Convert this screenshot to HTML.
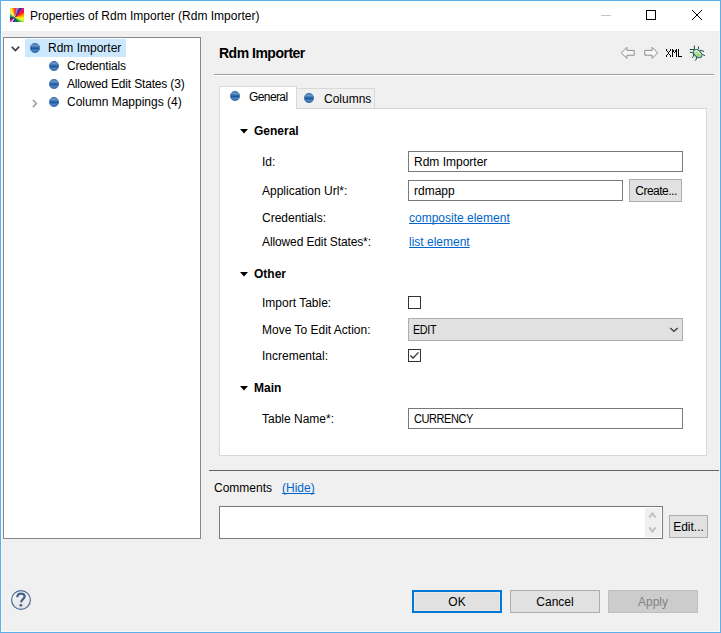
<!DOCTYPE html>
<html><head><meta charset="utf-8">
<style>
*{margin:0;padding:0;box-sizing:border-box}
html,body{width:721px;height:633px;overflow:hidden;background:#f0f0f0}
body{position:relative;font-family:"Liberation Sans",sans-serif;font-size:12px;color:#000}
.a{position:absolute}
.t{position:absolute;white-space:nowrap;line-height:14px}
.win{left:0;top:0;width:721px;height:633px;border:1px solid #5aaee9;background:#f0f0f0}
.title{left:1px;top:1px;width:719px;height:30px;background:#fff}
.field{position:absolute;background:#fff;border:1px solid #7a7a7a}
.btn{position:absolute;background:#e1e1e1;border:1px solid #adadad;text-align:center;padding-top:1px}
.lbl{position:absolute;white-space:nowrap;line-height:14px}
.link{color:#0066cc;text-decoration:underline;text-decoration-skip-ink:none}
.b{font-weight:bold}
</style></head><body>
<svg width="0" height="0" style="position:absolute"><defs>
<linearGradient id="sg" x1="0" y1="0" x2="0" y2="1">
<stop offset="0" stop-color="#3d6fae"/><stop offset="0.22" stop-color="#6b96c8"/><stop offset="0.45" stop-color="#2f6aab"/><stop offset="0.55" stop-color="#1c5b9f"/><stop offset="0.8" stop-color="#5588c2"/><stop offset="1" stop-color="#1a5599"/>
</linearGradient></defs></svg>
<div class="a win"></div>
<div class="a title"></div>
<div class="a" style="left:1px;top:31px;width:719px;height:601px;border:1px solid #faf7f4;border-top:none"></div>
<!-- app icon -->
<div class="a" style="left:10px;top:8px;width:14px;height:14px;background:conic-gradient(from 0deg at 5px 9.5px,#ff2020 0deg,#b080d0 15deg,#302080 30deg,#d02090 42deg,#ff1010 55deg,#ff9000 72deg,#ffff00 95deg,#c8f060 112deg,#20a020 135deg,#006020 160deg,#2080c0 178deg,#101070 198deg,#e0e0ff 215deg,#e02080 235deg,#101070 258deg,#108080 275deg,#40b040 295deg,#f0f0a0 318deg,#f0f020 335deg,#ff9020 348deg,#ff2020 360deg)"></div>
<div class="t" style="left:30px;top:9px">Properties of Rdm Importer (Rdm Importer)</div>
<!-- title buttons -->
<div class="a" style="left:601px;top:15px;width:10px;height:1px;background:#c6c6c6"></div>
<div class="a" style="left:646px;top:10px;width:10px;height:10px;border:1px solid #000"></div>
<svg class="a" style="left:692px;top:10px" width="10" height="10" viewBox="0 0 10 10"><path d="M0 0L10 10M10 0L0 10" stroke="#000" stroke-width="1"/></svg>

<!-- tree -->
<div class="a" style="left:3px;top:37px;width:198px;height:502px;background:#fff;border:1px solid #828790"></div>
<div class="a" style="left:25px;top:39px;width:101px;height:18px;background:#cce8ff"></div>


<svg class="a" style="left:10px;top:44px" width="11" height="9" viewBox="0 0 11 9"><path d="M1.8 2.8L5.46 6.5L9.1 2.7" fill="none" stroke="#404040" stroke-width="1.7"/></svg>
<svg class="a" style="left:30px;top:43px" width="10" height="10" viewBox="0 0 10 10"><circle cx="5" cy="5" r="4.7" fill="url(#sg)" stroke="#2a5f9f" stroke-width="0.6"/></svg>
<div class="t" style="left:48px;top:41px">Rdm Importer</div>
<svg class="a" style="left:49px;top:61px" width="10" height="10" viewBox="0 0 10 10"><circle cx="5" cy="5" r="4.7" fill="url(#sg)" stroke="#2a5f9f" stroke-width="0.6"/></svg>
<div class="t" style="left:67px;top:59px;letter-spacing:-0.18px">Credentials</div>
<svg class="a" style="left:49px;top:79px" width="10" height="10" viewBox="0 0 10 10"><circle cx="5" cy="5" r="4.7" fill="url(#sg)" stroke="#2a5f9f" stroke-width="0.6"/></svg>
<div class="t" style="left:67px;top:77px;letter-spacing:-0.17px">Allowed Edit States (3)</div>
<svg class="a" style="left:30px;top:98px" width="9" height="11" viewBox="0 0 9 11"><path d="M2.9 1.8L6.35 5.4L2.9 9.1" fill="none" stroke="#a6a6a6" stroke-width="1.7"/></svg>
<svg class="a" style="left:49px;top:97px" width="10" height="10" viewBox="0 0 10 10"><circle cx="5" cy="5" r="4.7" fill="url(#sg)" stroke="#2a5f9f" stroke-width="0.6"/></svg>
<div class="t" style="left:67px;top:95px">Column Mappings (4)</div>

<!-- header -->
<div class="t b" style="left:219px;top:46px;font-size:14px;letter-spacing:-0.5px">Rdm Importer</div>
<div class="a" style="left:214px;top:74px;width:500px;height:1px;background:#a0a0a0"></div>
<div class="a" style="left:214px;top:75px;width:500px;height:1px;background:#fff"></div>


<svg class="a" style="left:619px;top:45px" width="18" height="16" viewBox="0 0 18 16"><path d="M2.3 7.9L7.9 2.3V5.4H15.2V10.2H7.9V13.4Z" fill="#f6f6f6" stroke="#8c8c8c" stroke-width="1" stroke-linejoin="round"/></svg>
<svg class="a" style="left:642px;top:45px;transform:scaleX(-1)" width="18" height="16" viewBox="0 0 18 16"><path d="M2.3 7.9L7.9 2.3V5.4H15.2V10.2H7.9V13.4Z" fill="#f6f6f6" stroke="#8c8c8c" stroke-width="1" stroke-linejoin="round"/></svg>
<svg class="a" style="left:666px;top:49px" width="16" height="8" viewBox="0 0 16 8" shape-rendering="crispEdges" fill="#000">
<rect x="0" y="0" width="1" height="2"/><rect x="4" y="0" width="1" height="2"/><rect x="1" y="2" width="1" height="1"/><rect x="3" y="2" width="1" height="1"/><rect x="2" y="3" width="1" height="2"/><rect x="1" y="5" width="1" height="1"/><rect x="3" y="5" width="1" height="1"/><rect x="0" y="6" width="1" height="2"/><rect x="4" y="6" width="1" height="2"/>
<rect x="6" y="0" width="1" height="8"/><rect x="10" y="0" width="1" height="8"/><rect x="7" y="1" width="1" height="2"/><rect x="9" y="1" width="1" height="2"/><rect x="8" y="3" width="1" height="1"/>
<rect x="12" y="0" width="1" height="8"/><rect x="12" y="7" width="4" height="1"/>
</svg>
<svg class="a" style="left:686px;top:43px" width="22" height="20" viewBox="0 0 22 20">
<defs><linearGradient id="bg1" x1="0" y1="0" x2="1" y2="1"><stop offset="0" stop-color="#f0f8e0"/><stop offset="0.5" stop-color="#c4e3a0"/><stop offset="1" stop-color="#7cbf50"/></linearGradient></defs>
<g fill="none" stroke="#1c4a32" stroke-width="1" stroke-linecap="round">
<path d="M8.4 3V6.2M4.2 6.5H8M12.5 4V5.7L11.3 6.6M14.2 7.4L15.8 7.6L17.7 8.4M4.2 9.3L6 9.5L7.6 10.4M16.4 11.4L18.6 12.5M7.6 10.7V13.3L6.3 14.5M10.4 14.2V16.1L9.3 17.4"/>
</g>
<ellipse cx="11.7" cy="10.6" rx="5" ry="3.2" transform="rotate(45 11.7 10.6)" fill="url(#bg1)" stroke="#1a6878" stroke-width="1"/>
<path d="M10 9L14 13" stroke="#8cc070" stroke-width="0.8"/>
</svg>

<!-- tabs & content -->
<div class="a" style="left:296px;top:88px;width:79px;height:21px;border:1px solid #d9d9d9;background:#f0f0f0"></div>
<div class="a" style="left:219px;top:108px;width:488px;height:348px;border:1px solid #d9d9d9;background:#fff"></div>
<div class="a" style="left:219px;top:86px;width:78px;height:23px;border:1px solid #d9d9d9;border-bottom:none;background:#fff"></div>
<div class="t" style="left:249px;top:90px;letter-spacing:-0.6px">General</div>
<div class="t" style="left:324px;top:92px">Columns</div>


<svg class="a" style="left:230px;top:91px" width="10" height="10" viewBox="0 0 10 10"><circle cx="5" cy="5" r="4.7" fill="url(#sg)" stroke="#2a5f9f" stroke-width="0.6"/></svg><svg class="a" style="left:304px;top:93px" width="10" height="10" viewBox="0 0 10 10"><circle cx="5" cy="5" r="4.7" fill="url(#sg)" stroke="#2a5f9f" stroke-width="0.6"/></svg>
<svg class="a" style="left:240px;top:129px" width="8" height="5" viewBox="0 0 8 5"><path d="M0 0H8L4 4.5Z" fill="#000"/></svg>
<div class="t b" style="left:254px;top:124px">General</div>
<div class="t" style="left:262px;top:155px">Id:</div>
<div class="field" style="left:408px;top:151px;width:275px;height:21px"></div>
<div class="t" style="left:414px;top:155px">Rdm Importer</div>
<div class="t" style="left:262px;top:184px">Application Url*:</div>
<div class="field" style="left:408px;top:180px;width:215px;height:21px"></div>
<div class="t" style="left:414px;top:184px">rdmapp</div>
<div class="btn" style="left:629px;top:179px;width:53px;height:23px;line-height:21px;letter-spacing:-0.5px;text-indent:1px">Create...</div>
<div class="t" style="left:262px;top:211px">Credentials:</div>
<div class="t link" style="left:409px;top:211px">composite element</div>
<div class="t" style="left:262px;top:235px;letter-spacing:-0.12px">Allowed Edit States*:</div>
<div class="t link" style="left:409px;top:235px">list element</div>

<svg class="a" style="left:240px;top:272px" width="8" height="5" viewBox="0 0 8 5"><path d="M0 0H8L4 4.5Z" fill="#000"/></svg>
<div class="t b" style="left:254px;top:267px">Other</div>
<div class="t" style="left:262px;top:296px">Import Table:</div>
<div class="a" style="left:408px;top:296px;width:13px;height:13px;border:1px solid #333;background:#fff"></div>
<div class="t" style="left:262px;top:323px">Move To Edit Action:</div>
<div class="a" style="left:408px;top:318px;width:275px;height:23px;border:1px solid #adadad;background:#e1e1e1"></div>
<div class="t" style="left:413px;top:323px;letter-spacing:-0.4px;transform:scaleX(0.9);transform-origin:0 0">EDIT</div>
<svg class="a" style="left:668px;top:325px" width="12" height="9" viewBox="0 0 12 9"><path d="M2.2 2.9L5.9 6.3L9.7 2.9" fill="none" stroke="#404040" stroke-width="1.3"/></svg>
<div class="t" style="left:262px;top:349px">Incremental:</div>
<div class="a" style="left:408px;top:349px;width:13px;height:13px;border:1px solid #333;background:#fff"></div>
<svg class="a" style="left:408px;top:349px" width="13" height="13" viewBox="0 0 13 13"><path d="M2.3 6.4L5 9L10.5 3.4" fill="none" stroke="#333" stroke-width="1.35"/></svg>

<svg class="a" style="left:240px;top:386px" width="8" height="5" viewBox="0 0 8 5"><path d="M0 0H8L4 4.5Z" fill="#000"/></svg>
<div class="t b" style="left:254px;top:381px">Main</div>
<div class="t" style="left:262px;top:412px">Table Name*:</div>
<div class="field" style="left:408px;top:408px;width:275px;height:21px"></div>
<div class="t" style="left:414px;top:412px;letter-spacing:-0.5px;transform:scaleX(0.92);transform-origin:0 0">CURRENCY</div>

<!-- bottom separator -->
<div class="a" style="left:209px;top:470px;width:510px;height:1px;background:#646464"></div>
<div class="t" style="left:214px;top:481px">Comments</div>
<div class="t link" style="left:282px;top:481px">(Hide)</div>
<div class="field" style="left:219px;top:506px;width:444px;height:33px"></div>
<div class="a" style="left:645px;top:508px;width:16px;height:29px;background:#f0f0f0"></div>
<svg class="a" style="left:645px;top:508px" width="16" height="29" viewBox="0 0 16 29"><path d="M4.2 9.7L7.4 5.5L10.6 9.7M4.2 19.3L7.4 23.5L10.6 19.3" fill="none" stroke="#c2c2c2" stroke-width="2"/></svg>
<div class="btn" style="left:669px;top:515px;width:39px;height:23px;line-height:21px">Edit...</div>


<svg class="a" style="left:10px;top:589px" width="22" height="22" viewBox="0 0 22 22">
<defs><linearGradient id="hg" x1="0" y1="0" x2="0" y2="1"><stop offset="0" stop-color="#fafafa"/><stop offset="1" stop-color="#e4e4e4"/></linearGradient></defs>
<circle cx="11" cy="11" r="9.4" fill="url(#hg)" stroke="#4d6897" stroke-width="1.2"/>
<path d="M7.3 8.3C7.3 5.8 8.9 4.7 11 4.7C13.2 4.7 14.7 5.9 14.7 7.6C14.7 9.7 11.3 10.1 11.1 13.4" fill="none" stroke="#44608f" stroke-width="2.2"/>
<circle cx="10.9" cy="16.3" r="1.4" fill="#44608f"/>
</svg>

<!-- dialog buttons -->
<div class="btn" style="left:412px;top:590px;width:90px;height:23px;border:2px solid #0078d7;line-height:19px;box-shadow:inset 0 0 0 1px #ece9e6">OK</div>
<div class="btn" style="left:510px;top:590px;width:90px;height:23px;line-height:21px">Cancel</div>
<div class="btn" style="left:608px;top:590px;width:90px;height:23px;line-height:21px;background:#cccccc;border-color:#bfbfbf;color:#838383">Apply</div>
</body></html>
